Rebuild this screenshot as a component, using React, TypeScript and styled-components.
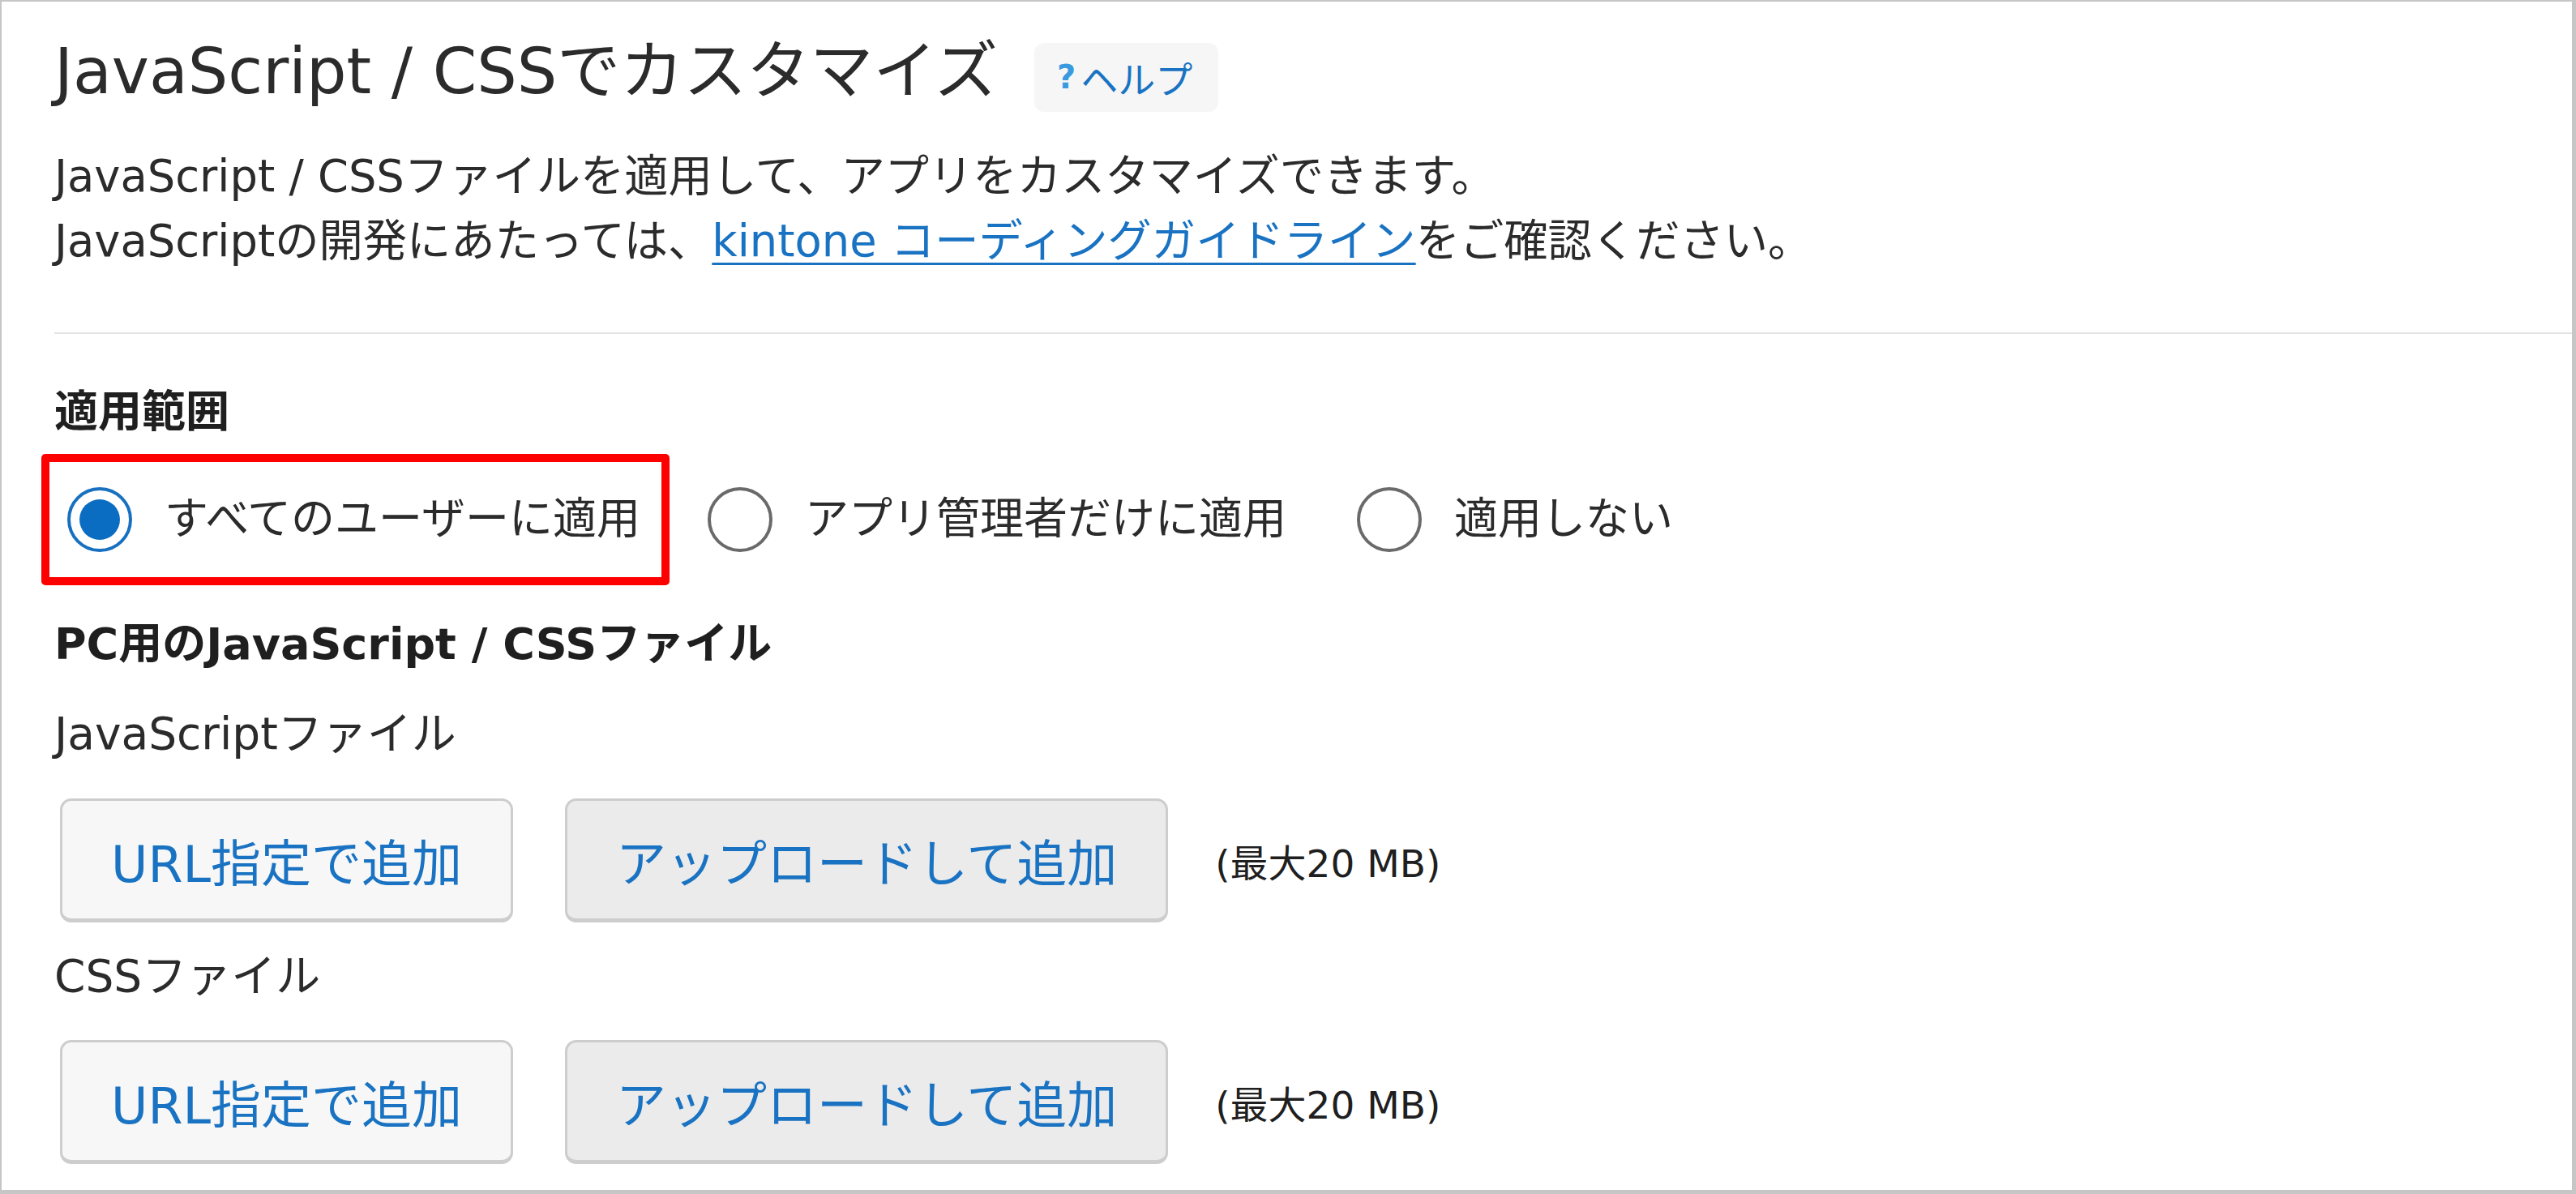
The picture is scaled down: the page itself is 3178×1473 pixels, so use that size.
import { createGlobalStyle, styled } from 'styled-components';

const GlobalStyle = createGlobalStyle`
    html, body {
        margin: 0;
        padding: 0;
        background: #ffffff;
        overflow: hidden;
    }
    body {
        font-family: "DejaVu Sans", "Noto Sans CJK JP", sans-serif;
        color: #333333;
    }
`;

const blue = '#1a73c2';

const Frame = styled.div`
    box-sizing: border-box;
    width: 100%;
    height: 1473px;
    border-style: solid;
    border-color: #c6c6c6;
    border-width: 2px 5px 5px 2px;
    padding: 36px 0 0 65px;
`;

const TitleRow = styled.div`
    display: flex;
    align-items: center;
    gap: 45px;
`;

const Title = styled.h1`
    margin: 0;
    font-size: 78px;
    font-weight: normal;
    line-height: 100px;
    color: #2b2b2b;
`;

const HelpButton = styled.span`
    display: inline-flex;
    align-items: center;
    height: 85px;
    margin-top: 14px;
    padding: 0 32px 0 28px;
    border-radius: 12px;
    background: #f6f6f6;
    color: ${blue};
    font-size: 46px;
`;

const HelpMark = styled.span`
    color: #3a9ae0;
    font-weight: bold;
    font-size: 40px;
    margin-right: 6px;
`;

const Description = styled.p`
    margin: 40px 0 0;
    font-size: 54.3px;
    line-height: 80px;
    color: #2b2b2b;
`;

const Link = styled.a`
    color: ${blue};
    text-decoration: underline;
    text-decoration-thickness: 3px;
    text-underline-offset: 8px;
`;

const Divider = styled.hr`
    margin: 72px 0 0;
    border: none;
    border-top: 2px solid #e3e3e3;
`;

const SectionLabel = styled.div<{ $top: number }>`
    margin-top: ${p => p.$top}px;
    font-size: 54px;
    font-weight: bold;
    line-height: 70px;
    color: #1f1f1f;
`;

const FieldLabel = styled.div<{ $top: number }>`
    margin-top: ${p => p.$top}px;
    font-size: 55px;
    line-height: 70px;
    color: #2b2b2b;
`;

const RadioGroup = styled.div`
    display: flex;
    align-items: center;
    margin: 16px 0 0 -16px;
    gap: 47px;
`;

const Highlight = styled.div`
    display: flex;
    align-items: center;
    height: 162px;
    box-sizing: border-box;
    border: 10px solid #ff0000;
    border-radius: 5px;
    padding: 0 26px 0 22px;
`;

const Option = styled.label<{ $spaced?: boolean }>`
    display: flex;
    align-items: center;
    gap: 40px;
    font-size: 54px;
    line-height: 70px;
    color: #2b2b2b;
    padding-right: ${p => (p.$spaced ? 40 : 0)}px;
`;

const Radio = styled.span<{ $checked?: boolean }>`
    box-sizing: border-box;
    width: 80px;
    height: 80px;
    border-radius: 50%;
    border: 4px solid ${p => (p.$checked ? '#1870c0' : '#6a6a6a')};
    background: #fff;
    display: flex;
    align-items: center;
    justify-content: center;
    flex: none;

    &::after {
        content: '';
        display: ${p => (p.$checked ? 'block' : 'none')};
        width: 50px;
        height: 50px;
        border-radius: 50%;
        background: #0b6dc2;
    }
`;

const ButtonRow = styled.div<{ $top: number }>`
    display: flex;
    align-items: center;
    gap: 64px;
    margin-top: ${p => p.$top}px;
    margin-left: 7px;
`;

const Button = styled.button<{ $shade: string }>`
    box-sizing: border-box;
    height: 153px;
    padding: 0 60px;
    border: 3px solid #cdcdcd;
    border-bottom-width: 5px;
    border-radius: 14px;
    background: ${p => p.$shade};
    color: ${blue};
    font-family: inherit;
    font-size: 62px;
    cursor: pointer;
`;

const Limit = styled.span`
    font-size: 47px;
    color: #1f1f1f;
    margin-left: -6px;
`;

const RADIOS = [
    { label: 'アプリ管理者だけに適用', spaced: true },
    { label: '適用しない', spaced: false },
];

const FileButtons = ({ top }: { top: number }) => (
    <ButtonRow $top={top}>
        <Button $shade="#f7f7f7">URL指定で追加</Button>
        <Button $shade="#ebebeb">アップロードして追加</Button>
        <Limit>(最大20 MB)</Limit>
    </ButtonRow>
);

export default function App() {
    return (
        <>
            <GlobalStyle />
            <Frame>
                <TitleRow>
                    <Title>JavaScript / CSSでカスタマイズ</Title>
                    <HelpButton>
                        <HelpMark>?</HelpMark>ヘルプ
                    </HelpButton>
                </TitleRow>
                <Description>
                    JavaScript / CSSファイルを適用して、アプリをカスタマイズできます。
                    <br />
                    JavaScriptの開発にあたっては、<Link href="#">kintone コーディングガイドライン</Link>をご確認ください。
                </Description>
                <Divider />

                <SectionLabel $top={62}>適用範囲</SectionLabel>
                <RadioGroup>
                    <Highlight>
                        <Option>
                            <Radio $checked />
                            すべてのユーザーに適用
                        </Option>
                    </Highlight>
                    {RADIOS.map(r => (
                        <Option key={r.label} $spaced={r.spaced}>
                            <Radio />
                            {r.label}
                        </Option>
                    ))}
                </RadioGroup>

                <SectionLabel $top={38}>PC用のJavaScript / CSSファイル</SectionLabel>
                <FieldLabel $top={40}>JavaScriptファイル</FieldLabel>
                <FileButtons top={45} />
                <FieldLabel $top={31}>CSSファイル</FieldLabel>
                <FileButtons top={44} />
            </Frame>
        </>
    );
}
